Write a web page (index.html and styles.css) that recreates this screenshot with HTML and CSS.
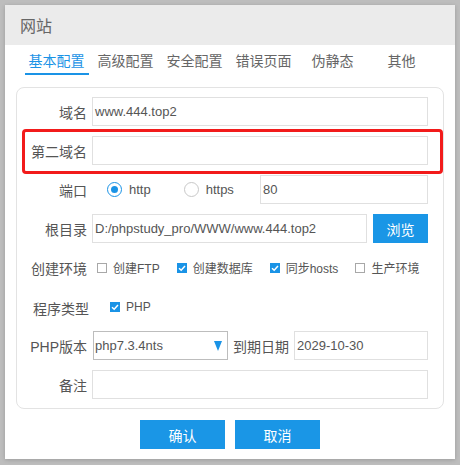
FILE: index.html
```html
<!DOCTYPE html>
<html lang="zh">
<head>
<meta charset="utf-8">
<link rel="stylesheet" href="styles.css">
</head>
<body>
<div class="dialog">
  <div class="title">网站</div>
  <div class="tabs">
    <span class="tab active">基本配置</span>
    <span class="tab">高级配置</span>
    <span class="tab">安全配置</span>
    <span class="tab">错误页面</span>
    <span class="tab">伪静态</span>
    <span class="tab">其他</span>
  </div>
  <div class="panel">
    <div class="row">
      <span class="lbl">域名</span>
      <div class="input">www.444.top2</div>
    </div>
    <div class="row highlighted">
      <span class="lbl">第二域名</span>
      <div class="input"></div>
      <span class="mark"></span>
    </div>
    <div class="row">
      <span class="lbl">端口</span>
      <div class="radios">
        <span class="radio-item"><span class="radio on"></span>http</span>
        <span class="radio-item second"><span class="radio"></span>https</span>
      </div>
      <div class="input port">80</div>
    </div>
    <div class="row">
      <span class="lbl">根目录</span>
      <div class="input">D:/phpstudy_pro/WWW/www.444.top2</div>
      <span class="btn browse">浏览</span>
    </div>
    <div class="row">
      <span class="lbl">创建环境</span>
      <div class="checks">
        <span class="check-item"><span class="box"></span>创建FTP</span>
        <span class="check-item"><span class="box on"><svg viewBox="0 0 10 10"><polyline points="2,5.2 4.2,7.2 8,3" /></svg></span>创建数据库</span>
        <span class="check-item"><span class="box on"><svg viewBox="0 0 10 10"><polyline points="2,5.2 4.2,7.2 8,3" /></svg></span>同步hosts</span>
        <span class="check-item"><span class="box"></span>生产环境</span>
      </div>
    </div>
    <div class="row">
      <span class="lbl nudge">程序类型</span>
      <div class="checks program">
        <span class="check-item"><span class="box on"><svg viewBox="0 0 10 10"><polyline points="2,5.2 4.2,7.2 8,3" /></svg></span>PHP</span>
      </div>
    </div>
    <div class="row">
      <span class="lbl">PHP版本</span>
      <div class="select"><span>php7.3.4nts</span><span class="arrow"></span></div>
      <span class="lbl inline">到期日期</span>
      <div class="input">2029-10-30</div>
    </div>
    <div class="row">
      <span class="lbl">备注</span>
      <div class="input"></div>
    </div>
  </div>
  <div class="actions">
    <span class="btn action">确认</span>
    <span class="btn action">取消</span>
  </div>
</div>
</body>
</html>
```
FILE: styles.css
```css
html, body {
  margin: 0;
  padding: 0;
}
body {
  width: 460px;
  height: 465px;
  background: #bdbdbd;
  font-family: "Liberation Sans", "Noto Sans CJK SC", sans-serif;
  color: #555;
  overflow: hidden;
}
.dialog {
  margin: 5px 0 0 5px;
  width: 450px;
  height: 454px;
  background: #fff;
  box-shadow: 0 1px 4px rgba(0,0,0,0.18);
}
.title {
  height: 40px;
  box-sizing: border-box;
  padding: 4px 0 0 15px;
  line-height: 36px;
  background: #ebebeb;
  font-size: 16px;
  color: #666;
}
.tabs {
  display: flex;
  height: 30px;
  padding-left: 17px;
}
.tab {
  position: relative;
  width: 69px;
  text-align: center;
  font-size: 14px;
  line-height: 28px;
  padding-top: 2px;
  color: #666;
}
.tab.active {
  color: #1a93e6;
}
.tab.active::after {
  content: "";
  position: absolute;
  left: 3px;
  right: 2px;
  bottom: 0;
  height: 2px;
  background: #1a93e6;
}
.panel {
  margin: 12px 11px 0;
  border: 1px solid #e3e3e3;
  border-radius: 8px;
  padding: 9px 15px 9px 0;
}
.row {
  position: relative;
  display: flex;
  align-items: center;
  height: 29px;
  margin-top: 10px;
}
.row:first-child {
  margin-top: 0;
}
.lbl {
  flex: none;
  width: 70px;
  margin-right: 5px;
  text-align: right;
  font-size: 14px;
  color: #555;
  white-space: nowrap;
}
.lbl.nudge {
  width: 72px;
  margin-right: 3px;
  padding-top: 2px;
}
.lbl.inline {
  width: auto;
  margin: 0 5px;
}
.input {
  flex: 1;
  height: 29px;
  box-sizing: border-box;
  border: 1px solid #e0e0e0;
  padding-left: 2px;
  font-size: 13px;
  line-height: 27px;
  color: #555;
  white-space: nowrap;
  overflow: hidden;
}
.mark {
  position: absolute;
  left: 5px;
  right: -15px;
  top: -7px;
  bottom: -9px;
  border: 3px solid #f21b1b;
  border-radius: 4px;
}
.radios {
  display: flex;
  align-items: center;
  font-size: 13px;
  width: 168px;
  flex: none;
}
.radio-item {
  display: flex;
  align-items: center;
  gap: 7px;
  margin-left: 15px;
}
.radio-item.second {
  margin-left: 33px;
}
.radio {
  width: 15px;
  height: 15px;
  box-sizing: border-box;
  border: 1px solid #c8c8c8;
  border-radius: 50%;
  position: relative;
}
.radio.on {
  border-color: #1a93e6;
}
.radio.on::after {
  content: "";
  position: absolute;
  left: 3px;
  top: 3px;
  width: 7px;
  height: 7px;
  border-radius: 50%;
  background: #1a93e6;
}
.btn {
  display: flex;
  align-items: center;
  justify-content: center;
  background: #1a96e6;
  color: #fff;
  font-size: 14px;
}
.browse {
  flex: none;
  width: 55px;
  height: 29px;
  margin-left: 6px;
}
.checks {
  display: flex;
  align-items: center;
  gap: 17px;
  padding-left: 5px;
  font-size: 12px;
  color: #555;
}
.checks.program {
  padding-left: 18px;
}
.check-item {
  display: flex;
  align-items: center;
  gap: 6px;
}
.box {
  width: 10px;
  height: 10px;
  box-sizing: border-box;
  border: 1px solid #a8a8a8;
  background: #fff;
  display: flex;
}
.box.on {
  border: none;
  background: #1a93e6;
}
.box svg {
  width: 10px;
  height: 10px;
  fill: none;
  stroke: #fff;
  stroke-width: 1.5;
}
.select {
  flex: none;
  width: 135px;
  height: 29px;
  margin-left: 1px;
  box-sizing: border-box;
  border: 1px solid #bdbdbd;
  display: flex;
  align-items: center;
  justify-content: space-between;
  padding: 0 5px 0 1px;
  font-size: 13px;
  color: #555;
}
.arrow {
  width: 0;
  height: 0;
  border-left: 4.5px solid transparent;
  border-right: 4.5px solid transparent;
  border-top: 10px solid #1a93e6;
}
.actions {
  display: flex;
  justify-content: center;
  gap: 10px;
  margin-top: 11px;
}
.action {
  width: 85px;
  height: 29px;
}
```
